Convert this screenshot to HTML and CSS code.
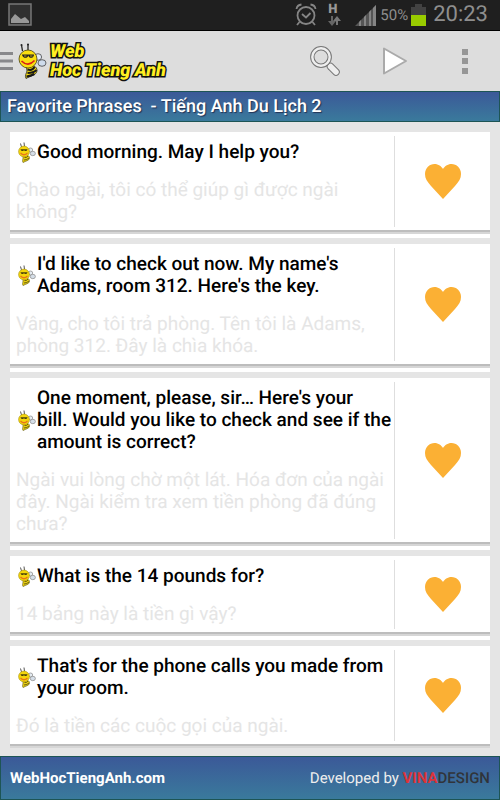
FILE: index.html
```html
<!DOCTYPE html>
<html lang="vi">
<head>
<meta charset="utf-8">
<meta name="viewport" content="width=device-width, initial-scale=1">
<title>Web Hoc Tieng Anh</title>
<link rel="stylesheet" href="styles.css">
</head>
<body>
<svg class="defs" aria-hidden="true">
  <symbol id="bee" viewBox="0 0 28 36">
    <path d="M4 8L3 2M9.500 7.500V1" fill="none" stroke="#222" stroke-width="1.300"/>
    <circle cx="3" cy="2" r="1" fill="#222"/><circle cx="9.500" cy="1.500" r="1" fill="#222"/>
    <ellipse cx="19.500" cy="14" rx="3.600" ry="3.300" fill="#e3eaf5" stroke="#444" stroke-width=".8"/>
    <ellipse cx="23.500" cy="20" rx="4" ry="3.300" fill="#cfdcec" stroke="#444" stroke-width=".8"/>
    <path d="M8 24C13 21 19 23 18.500 28C18 32 12 33 7.500 35.500C6 33 8 30 8.500 28Z" fill="#f5dc13" stroke="#222" stroke-width=".8"/>
    <path d="M9 26.500Q14 28 16 24M9 30Q15 30 18 27M8 33.500Q12 33 16 31" fill="none" stroke="#181818" stroke-width="2"/>
    <circle cx="9.500" cy="16" r="9" fill="#fadf10" stroke="#49410e" stroke-width=".8"/>
    <path d="M3.500 11.500H15.500C15.500 15.500 10.500 16 9.800 12.500C9 16 4 15.500 3.500 11.500Z" fill="#222"/>
    <path d="M5.500 13H8M11.500 13H14" stroke="#b99c20" stroke-width="1"/>
    <path d="M3 18Q9.500 24.500 16 17.500" fill="none" stroke="#d8201a" stroke-width="1.700"/>
  </symbol>
  <symbol id="bee-small" viewBox="0 0 18 21">
    <path d="M3.500 5L2.500 1.500M6.500 4.500L6 .5" fill="none" stroke="#555" stroke-width="1"/>
    <ellipse cx="12.500" cy="8" rx="2.200" ry="2" fill="#e3eaf0" stroke="#888" stroke-width=".7"/>
    <ellipse cx="14.800" cy="11.500" rx="2.600" ry="2.200" fill="#d5dee8" stroke="#888" stroke-width=".7"/>
    <path d="M5 13.500C9 12.500 12 13.500 11.500 16.500C11 18.500 8 19 5 20.500C4 19 5 17.500 5 16Z" fill="#e9cf10" stroke="#5c5410" stroke-width=".6"/>
    <path d="M6.500 15.500Q9 16 10 14M6 18Q9 18 11 16" fill="none" stroke="#5c5410" stroke-width=".9"/>
    <circle cx="6" cy="9.500" r="5.400" fill="#f4d60c" stroke="#a8900c" stroke-width=".6"/>
    <path d="M2.500 7.300H9.500C9.300 9.500 6.500 9.500 6 8C5.500 9.500 2.800 9.500 2.500 7.300Z" fill="#4a420c"/>
    <path d="M2.500 11Q6 14.500 9.500 11" fill="none" stroke="#e8741c" stroke-width="1.200"/>
  </symbol>
  <symbol id="heart" viewBox="0 0 36 35">
    <path d="M18 35L6 22C2 17.500 0 14.500 0 10C0 4 4.500 0 9.500 0C13.500 0 16.500 2.500 18 5C19.500 2.500 22.500 0 26.500 0C31.500 0 36 4 36 10C36 14.500 34 17.500 30 22Z" fill="#fbb034"/>
  </symbol>
</svg>

<div class="status">
  <svg class="picture" viewBox="0 0 24 24" aria-hidden="true"><rect x="1" y="1" width="22" height="21" fill="#303030" stroke="#777" stroke-width="1.500"/><path d="M3 20V16L7 11L13 16L17 14L21 18V20Z" fill="#999"/></svg>
  <div class="status-right">
    <svg class="alarm" viewBox="0 0 22 24" aria-hidden="true"><g fill="none" stroke="#858585" stroke-width="1.800"><circle cx="11" cy="12.500" r="8.500"/><path d="M1.500 6Q2 2 6.500 1.500M20.500 6Q20 2 15.500 1.500M4.500 19L2 22M17.500 19L20 22M7 11L11 14.500L15.500 10"/></g></svg>
    <div class="network"><span>H</span>
      <svg viewBox="0 0 13 10" aria-hidden="true"><path d="M3 0H5V5H8L4 10L0 5H3Z" fill="#666"/><path d="M9 0L13 5H10V9H8V5H5Z" fill="#777"/></svg>
    </div>
    <svg class="signal" viewBox="0 0 21 21" aria-hidden="true"><path d="M0 21L21 0V21Z" fill="#555"/><path d="M4 21V17L6 15V21M9 21V12L11 10V21M14 21V7L16 5V21M18 21V3L21 0V21" fill="#858585"/></svg>
    <span class="percent">50%</span>
    <svg class="battery" viewBox="0 0 15 22" aria-hidden="true"><path d="M0 3H4V0H11V3H15V12H0Z" fill="#424242"/><path d="M0 11H15V22H0Z" fill="#99cc00"/></svg>
    <time class="clock">20:23</time>
  </div>
</div>

<header class="bar">
  <button class="menu" type="button" aria-label="Menu"><svg viewBox="0 0 13 18" aria-hidden="true"><path d="M0 1.500H13M0 9H13M0 16.500H13" stroke="#88888b" stroke-width="3"/></svg></button>
  <a class="brand" href="#">
    <svg aria-hidden="true"><use href="#bee"/></svg>
    <span class="wordmark"><span>Web</span><span>Hoc Tieng Anh</span></span>
  </a>
  <nav class="actions">
    <button type="button" aria-label="Search"><svg viewBox="0 0 30 30" aria-hidden="true"><path d="M18 18L26 26" stroke="#777" stroke-width="3" /><path d="M20.500 20.500L26 26" stroke="#777" stroke-width="7.500" stroke-linecap="round"/><path d="M20.500 20.500L26 26" stroke="#eee" stroke-width="5.500" stroke-linecap="round"/><circle cx="11" cy="11" r="8.700" fill="none" stroke="#777" stroke-width="4.400"/><circle cx="11" cy="11" r="8.700" fill="none" stroke="#eee" stroke-width="2.400"/></svg></button>
    <button type="button" aria-label="Play"><svg viewBox="0 0 30 30" aria-hidden="true"><path d="M4 2.500V27.500L26 15Z" fill="#fff" stroke="#aaa" stroke-width="2" stroke-linejoin="round"/></svg></button>
    <button type="button" aria-label="More options"><svg viewBox="0 0 30 30" aria-hidden="true"><path d="M12 3H18V9H12ZM12 12H18V18H12ZM12 22H18V28H12Z" fill="#969696"/></svg></button>
  </nav>
</header>

<h1 class="title">Favorite Phrases &nbsp;- Tiếng Anh Du Lịch 2</h1>

<main class="list">
  <article class="card">
    <div class="face">
      <div class="text"><h2><svg aria-hidden="true"><use href="#bee-small"/></svg><span>Good morning. May I help you?</span></h2><p>Chào ngài, tôi có thể giúp gì được ngài không?</p></div>
      <button class="fav" type="button" aria-label="Favorite"><svg aria-hidden="true"><use href="#heart"/></svg></button>
    </div>
  </article>
  <article class="card">
    <div class="face">
      <div class="text"><h2><svg aria-hidden="true"><use href="#bee-small"/></svg><span>I'd like to check out now. My name's Adams, room 312. Here's the key.</span></h2><p>Vâng, cho tôi trả phòng. Tên tôi là Adams, phòng 312. Đây là chìa khóa.</p></div>
      <button class="fav" type="button" aria-label="Favorite"><svg aria-hidden="true"><use href="#heart"/></svg></button>
    </div>
  </article>
  <article class="card">
    <div class="face">
      <div class="text"><h2><svg aria-hidden="true"><use href="#bee-small"/></svg><span>One moment, please, sir… Here's your<br>bill. Would you like to check and see if the amount is correct?</span></h2><p>Ngài vui lòng chờ một lát. Hóa đơn của ngài đây. Ngài kiểm tra xem tiền phòng đã đúng chưa?</p></div>
      <button class="fav" type="button" aria-label="Favorite"><svg aria-hidden="true"><use href="#heart"/></svg></button>
    </div>
  </article>
  <article class="card">
    <div class="face">
      <div class="text"><h2><svg aria-hidden="true"><use href="#bee-small"/></svg><span>What is the 14 pounds for?</span></h2><p>14 bảng này là tiền gì vậy?</p></div>
      <button class="fav" type="button" aria-label="Favorite"><svg aria-hidden="true"><use href="#heart"/></svg></button>
    </div>
  </article>
  <article class="card">
    <div class="face">
      <div class="text"><h2><svg aria-hidden="true"><use href="#bee-small"/></svg><span>That's for the phone calls you made from your room.</span></h2><p>Đó là tiền các cuộc gọi của ngài.</p></div>
      <button class="fav" type="button" aria-label="Favorite"><svg aria-hidden="true"><use href="#heart"/></svg></button>
    </div>
  </article>
</main>

<footer class="footer">
  <a class="site" href="#">WebHocTiengAnh.com</a>
  <span class="credit">Developed by <b>VINA</b><i>DESIGN</i></span>
</footer>
</body>
</html>
```
FILE: styles.css
```css
* { box-sizing: border-box; }
body {
  margin: 0;
  min-height: 100vh;
  display: flex;
  flex-direction: column;
  background: #e5e5e5;
  font-family: Roboto, "Noto Sans", sans-serif;
  text-rendering: geometricPrecision;
  color: #000;
}
.defs { position: absolute; width: 0; height: 0; }
h1, h2, p { margin: 0; }
svg { display: block; flex: none; }
a { color: inherit; text-decoration: none; }
button { border: 0; padding: 0; background: none; display: flex; align-items: center; justify-content: center; }

.status {
  height: 31px;
  padding: 0 12px 0 8px;
  display: flex;
  align-items: center;
  justify-content: space-between;
  background: #1f1f1f;
  border-bottom: 1px solid #000;
  color: #8e8e8e;
}
.picture { width: 24px; height: 24px; }
.status-right { display: flex; align-items: center; }
.alarm { width: 22px; height: 24px; margin-right: 11px; }
.network { width: 14px; margin-right: 13px; display: flex; flex-direction: column; gap: 1px; }
.network span { font-size: 13px; line-height: 11px; font-weight: 900; color: #999; }
.network svg { width: 13px; height: 10px; }
.signal { width: 21px; height: 21px; margin-right: 4px; }
.percent { font-size: 15px; margin-right: 3px; }
.battery { width: 15px; height: 22px; margin-right: 7px; }
.clock { font-size: 22px; line-height: 30px; }

.bar {
  height: 60px;
  display: flex;
  align-items: center;
  background: #dddddd;
}
.menu svg { width: 13px; height: 18px; }
.brand { display: flex; align-items: center; gap: 3px; margin-left: 5px; }
.brand svg { width: 29px; height: 36px; }
.wordmark {
  display: flex;
  flex-direction: column;
  font-size: 18px;
  line-height: 19px;
  font-weight: 900;
  font-style: italic;
  color: #ffee22;
  -webkit-text-stroke: 3px #111;
  paint-order: stroke fill;
  white-space: nowrap;
}
.actions { margin-left: auto; display: flex; }
.actions button { width: 70px; height: 60px; }
.actions svg { width: 30px; height: 30px; }

.title {
  height: 31px;
  padding: 0 6px;
  border: 1px solid #1d5555;
  background: linear-gradient(#3b5998, #3a7a9c);
  color: #fff;
  font-size: 18px;
  line-height: 30px;
  font-weight: 500;
  text-shadow: 1px 1px 1px #223355;
}

.list { flex: 1; padding: 10px 10px 8px; display: flex; flex-direction: column; gap: 6px; }
.card { background: #fff; padding-bottom: 4px; }
.card:last-child { padding-bottom: 0; }
.face {
  display: flex;
  padding: 4px 0;
  box-shadow: inset 0 -2px #d6d6d6, inset 0 -4px #bdbdbd;
}
.text { flex: 1; padding: 5px 0 7px 6px; }
.text h2 {
  display: flex;
  align-items: center;
  margin-bottom: 16px;
  padding-left: 2px;
  font-size: 19px;
  line-height: 22px;
  font-weight: 500;
}
.text h2 svg { width: 18px; height: 21px; margin-right: 1px; }
.text p { padding-right: 6px; font-size: 19px; line-height: 22px; color: #e5e5e5; }
.fav { width: 96px; flex: none; margin-bottom: 3px; border-left: 1px solid #dedede; }
.fav svg { width: 36px; height: 35px; }

.footer {
  height: 44px;
  padding: 0 9px;
  display: flex;
  align-items: center;
  justify-content: space-between;
  border: 1px solid #1d5555;
  background: linear-gradient(#3b5998, #3a7a9c);
  color: #fff;
  font-size: 15px;
}
.site { font-weight: 700; }
.credit { color: #eeeeee; }
.credit b { color: #dd3338; font-weight: 700; }
.credit i { color: #30343a; font-style: normal; font-weight: 500; }
```
